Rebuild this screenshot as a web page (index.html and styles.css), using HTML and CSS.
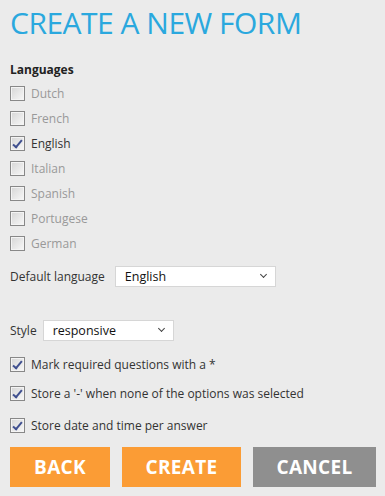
FILE: index.html
```html
<!DOCTYPE html>
<html lang="en">
<head>
    <meta charset="UTF-8">
    <title>Create a new form</title>
    <link rel="stylesheet" href="styles.css">
</head>
<body>
    <div class="container">
        <h1>CREATE A NEW FORM</h1>

        <div class="languages">
            <h4>Languages</h4>
            <label class="check off"><span class="box"></span>Dutch</label>
            <label class="check off"><span class="box"></span>French</label>
            <label class="check on"><span class="box"></span>English</label>
            <label class="check off"><span class="box"></span>Italian</label>
            <label class="check off"><span class="box"></span>Spanish</label>
            <label class="check off"><span class="box"></span>Portugese</label>
            <label class="check off"><span class="box"></span>German</label>
        </div>

        <div class="field default-lang">
            <span>Default language</span>
            <div class="select wide">English</div>
        </div>

        <div class="field style">
            <span>Style</span>
            <div class="select narrow">responsive</div>
        </div>

        <div class="options">
            <label class="check on opt1"><span class="box"></span>Mark required questions with a *</label>
            <label class="check on opt2"><span class="box"></span>Store a '-' when none of the options was selected</label>
            <label class="check on opt3"><span class="box"></span>Store date and time per answer</label>
        </div>

        <div class="buttons">
            <button class="btn orange back">BACK</button>
            <button class="btn orange create">CREATE</button>
            <button class="btn gray cancel">CANCEL</button>
        </div>
    </div>
</body>
</html>
```

FILE: styles.css
```css
body {
    margin: 0;
    background-color: #ebebeb;
    color: #333;
    font-family: 'Open Sans', sans-serif;
    font-size: 12px;
}
.container {
    padding: 0 9px 0 10px;
}
h1 {
    margin: 0;
    padding-top: 3px;
    height: 52px;
    font-size: 30px;
    font-weight: 400;
    line-height: 40px;
    color: #2aa8de;
    letter-spacing: -0.5px;
}
h4 {
    margin: 7px 0 3px;
    font-size: 12px;
    font-weight: 700;
    line-height: 16px;
    color: #222;
}
.check {
    display: flex;
    align-items: center;
    height: 25px;
    line-height: 16px;
}
.check.off {
    color: #999;
}
.check.on {
    color: #333;
}
.box {
    position: relative;
    box-sizing: border-box;
    width: 15px;
    height: 15px;
    margin-right: 6px;
    border: 1px solid #888;
    background: linear-gradient(135deg, #d6d6d6, #f8f8f8);
    box-shadow: inset 0 0 0 1px #f4f4f4;
}
.on .box::after {
    content: '';
    position: absolute;
    left: 4px;
    top: 1px;
    width: 3px;
    height: 8px;
    border-right: 2px solid #3f4f8f;
    border-bottom: 2px solid #3f4f8f;
    transform: rotate(40deg);
}
.field {
    display: flex;
    align-items: center;
}
.field span {
    margin-right: 6px;
}
.default-lang {
    margin-top: 9px;
    height: 22px;
}
.default-lang span {
    margin-right: 10px;
}
.style {
    margin-top: 33px;
    height: 21px;
}
.select {
    position: relative;
    box-sizing: border-box;
    height: 21px;
    padding: 1px 0 0 9px;
    background: #fff;
    border: 1px solid #d6d6d6;
    color: #111;
    font-size: 12.5px;
    line-height: 18px;
}
.select::after {
    content: '';
    position: absolute;
    right: 9px;
    top: 5px;
    width: 4px;
    height: 4px;
    border-right: 1.5px solid #444;
    border-bottom: 1.5px solid #444;
    transform: rotate(45deg);
}
.wide {
    width: 161px;
}
.narrow {
    width: 131px;
}
.options .check {
    height: 29px;
}
.options .opt1 {
    margin-top: 9px;
}
.options .opt3 {
    margin-top: 3px;
}
.buttons {
    display: flex;
    margin-top: 7px;
}
.btn {
    height: 40px;
    border: none;
    color: #fff;
    font-family: 'Open Sans', sans-serif;
    font-size: 19px;
    font-weight: 700;
    letter-spacing: 0.3px;
    cursor: pointer;
}
.orange {
    background: #fb9c35;
}
.gray {
    background: #8f8f8f;
}
.back {
    width: 100px;
    margin-right: 12px;
}
.create {
    width: 119px;
    margin-right: 12px;
}
.cancel {
    width: 123px;
}
```
